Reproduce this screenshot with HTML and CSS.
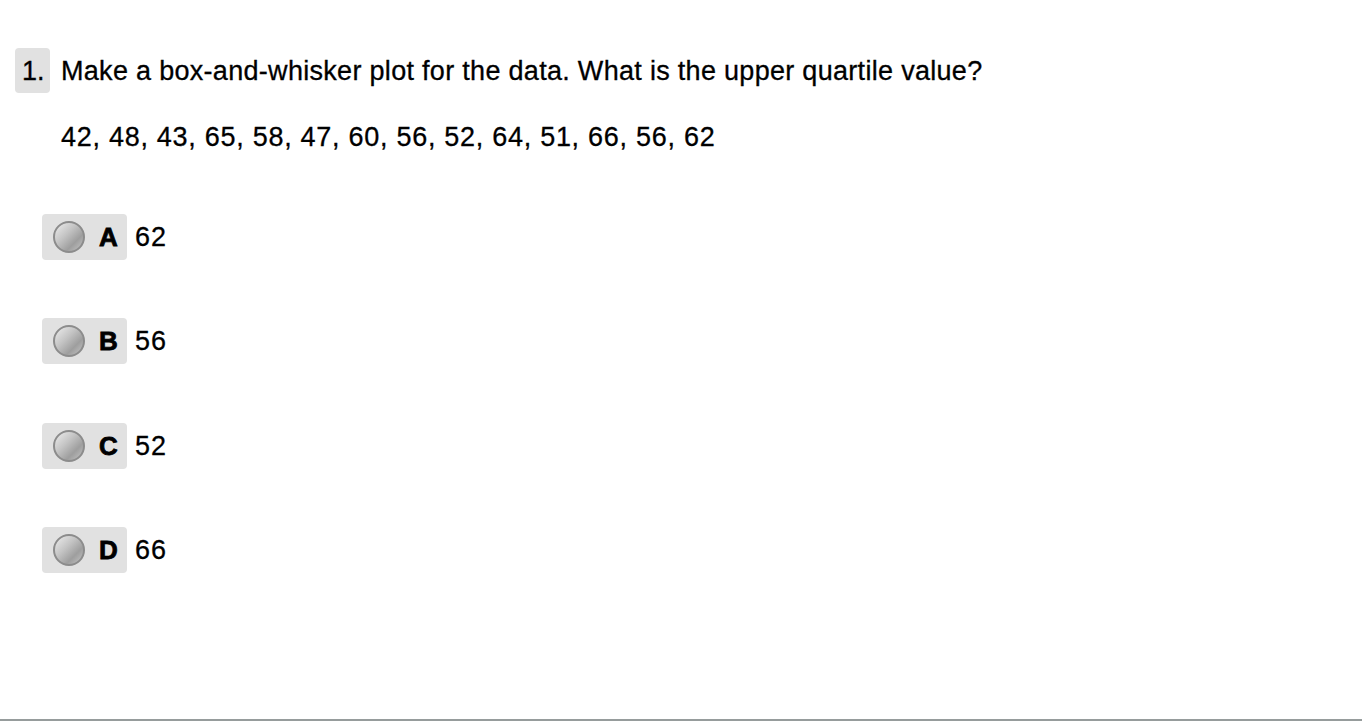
FILE: index.html
```html
<!DOCTYPE html>
<html>
<head>
<meta charset="utf-8">
<link rel="stylesheet" href="styles.css">
</head>
<body>
<div class="page">
  <div class="question">
    <div class="qhead">
      <span class="qnum">1.</span>
      <span class="qtext">Make a box-and-whisker plot for the data. What is the upper quartile value?</span>
    </div>
    <div class="data">42, 48, 43, 65, 58, 47, 60, 56, 52, 64, 51, 66, 56, 62</div>
    <div class="options">
      <div class="option"><span class="choice"><span class="radio"></span><span class="letter">A</span></span><span class="value">62</span></div>
      <div class="option"><span class="choice"><span class="radio"></span><span class="letter">B</span></span><span class="value">56</span></div>
      <div class="option"><span class="choice"><span class="radio"></span><span class="letter">C</span></span><span class="value">52</span></div>
      <div class="option"><span class="choice"><span class="radio"></span><span class="letter">D</span></span><span class="value">66</span></div>
    </div>
  </div>
  <div class="footer-line"></div>
</div>
</body>
</html>
```
FILE: styles.css
```css
html, body {
  margin: 0;
  padding: 0;
  background: #ffffff;
}
body {
  font-family: "Liberation Sans", Arial, sans-serif;
  color: #000;
  -webkit-text-stroke: 0.3px #000;
}
.page {
  height: 724px;
  display: flex;
  flex-direction: column;
  justify-content: space-between;
}
.question {
  padding: 48px 0 0 15px;
}
.qhead {
  display: flex;
  align-items: flex-start;
  gap: 11px;
}
.qnum {
  width: 35px;
  height: 45px;
  box-sizing: border-box;
  background: #e1e1e1;
  border-radius: 4px;
  font-size: 27px;
  line-height: 46px;
  padding-left: 7px;
}
.qtext {
  font-size: 27px;
  line-height: 46px;
  letter-spacing: 0.3px;
}
.data {
  margin: 29px 0 0 46px;
  font-size: 27px;
  line-height: 28px;
  letter-spacing: 0.72px;
}
.options {
  margin: 63px 0 0 27px;
  display: flex;
  flex-direction: column;
  gap: 58.3px;
}
.option {
  display: flex;
  align-items: center;
  gap: 8px;
  height: 46px;
}
.choice {
  display: flex;
  align-items: center;
  width: 85px;
  height: 46px;
  box-sizing: border-box;
  background: #e1e1e1;
  border-radius: 4px;
  padding-left: 11px;
}
.radio {
  width: 32px;
  height: 32px;
  box-sizing: border-box;
  border-radius: 50%;
  border: 2px solid #8c8c8c;
  background: linear-gradient(135deg, #eeeeee 0%, #c4c4c4 40%, #9e9e9e 70%, #c6c6c6 100%);
  -webkit-text-stroke: 0;
}
.letter {
  margin-left: 14px;
  font-size: 26px;
  font-weight: 700;
  line-height: 46px;
  -webkit-text-stroke: 0.8px #000;
}
.value {
  font-size: 27px;
  line-height: 46px;
  letter-spacing: 1px;
}
.footer-line {
  height: 2px;
  background: #969c9c;
  margin-bottom: 3px;
}
```
